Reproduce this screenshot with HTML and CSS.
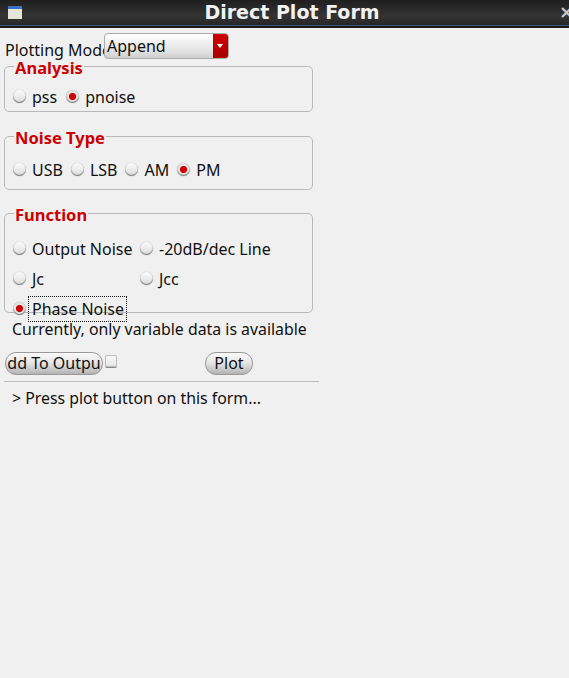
FILE: index.html
```html
<!DOCTYPE html>
<html lang="en">
<head>
    <meta charset="UTF-8">
    <title>Direct Plot Form</title>
    <link rel="stylesheet" href="styles.css">
</head>
<body>
    <div class="titlebar">
        <svg class="win-icon" width="14" height="14" viewBox="0 0 14 14">
            <rect x="0" y="0" width="14" height="13" fill="#dfe3dc"/>
            <rect x="1" y="3" width="12" height="9" fill="#e4e6da"/>
            <rect x="0" y="0" width="14" height="3" fill="#3b6fc0"/>
        </svg>
        <span class="title">Direct Plot Form</span>
        <span class="close">×</span>
    </div>

    <form class="form">
        <div class="mode-row">
            <label class="mode-label">Plotting Mode</label>
            <div class="select">
                <span class="select-text">Append</span>
                <span class="select-arrow"></span>
            </div>
        </div>

        <fieldset class="group group-analysis">
            <legend>Analysis</legend>
            <div class="radio-row">
                <label class="radio gap-a"><input type="radio" name="analysis"> pss</label>
                <label class="radio"><input type="radio" name="analysis" checked> pnoise</label>
            </div>
        </fieldset>

        <fieldset class="group group-noise">
            <legend>Noise Type</legend>
            <div class="radio-row">
                <label class="radio gap-n"><input type="radio" name="noise"> USB</label>
                <label class="radio gap-n"><input type="radio" name="noise"> LSB</label>
                <label class="radio gap-n"><input type="radio" name="noise"> AM</label>
                <label class="radio"><input type="radio" name="noise" checked> PM</label>
            </div>
        </fieldset>

        <fieldset class="group group-function">
            <legend>Function</legend>
            <div class="function-grid">
                <label class="radio"><input type="radio" name="func"> Output Noise</label>
                <label class="radio"><input type="radio" name="func"> -20dB/dec Line</label>
                <label class="radio"><input type="radio" name="func"> Jc</label>
                <label class="radio"><input type="radio" name="func"> Jcc</label>
                <label class="radio"><input type="radio" name="func" checked> <span class="focused">Phase Noise</span></label>
            </div>
        </fieldset>

        <p class="note">Currently, only variable data is available</p>

        <div class="button-row">
            <button type="button" class="btn btn-add"><span>dd To Outpu</span></button>
            <input type="checkbox" class="check">
            <button type="button" class="btn btn-plot">Plot</button>
        </div>

        <hr class="rule">
        <p class="status">&gt; Press plot button on this form...</p>
    </form>
</body>
</html>
```

FILE: styles.css
```css
html, body {
    margin: 0;
    height: 100%;
    overflow: hidden;
}
body {
    background: #f0f0f0;
    color: #111;
    font-family: "Noto Sans", sans-serif;
    font-size: 16px;
}
.titlebar {
    height: 26px;
    display: flex;
    align-items: center;
    background: linear-gradient(#1f1f1f, #333 60%, #262626);
    border-bottom: 2px solid #1a1a1a;
    box-shadow: inset 0 -1px 0 #3d5775;
    position: relative;
    overflow: hidden;
}
.win-icon {
    margin-left: 8px;
}
.title {
    position: absolute;
    left: 0;
    right: 0;
    top: 0;
    text-align: center;
    line-height: 24px;
    color: #f2f2f2;
    font-family: "DejaVu Sans", sans-serif;
    font-size: 19px;
    font-weight: bold;
    padding-left: 15px;
}
.close {
    position: absolute;
    right: -5px;
    top: 0;
    line-height: 24px;
    color: #c8c8c8;
    font-family: "DejaVu Sans", sans-serif;
    font-size: 18px;
    font-weight: bold;
}
.form {
    width: 315px;
    padding-left: 4px;
}
.mode-row {
    display: flex;
    height: 22px;
    margin-top: 5px;
}
.mode-label {
    width: 99px;
    margin-top: 8px;
    padding-left: 1px;
    white-space: nowrap;
    line-height: 19px;
}
.select {
    width: 125px;
    height: 26px;
    box-sizing: border-box;
    display: flex;
    border: 1px solid #aaa;
    border-radius: 4px;
    background: linear-gradient(#fff, #e2e2e2 70%, #cfcfcf);
    position: relative;
    overflow: hidden;
}
.select-text {
    flex: 1;
    padding-left: 2px;
    line-height: 24px;
}
.select-arrow {
    width: 15px;
    background: linear-gradient(#d00000, #a80000);
    position: relative;
}
.select-arrow::after {
    content: "";
    position: absolute;
    left: 4px;
    top: 10px;
    border-left: 3px solid transparent;
    border-right: 3px solid transparent;
    border-top: 4px solid #fff;
}
.group {
    margin: 0;
    padding: 0 0 0 9px;
    width: 309px;
    box-sizing: border-box;
    border: 1px solid #b8b8b8;
    border-radius: 5px;
}
.group legend {
    margin-left: 0;
    padding: 4px 1px 0;
    color: #cc0000;
    font-weight: bold;
    font-size: 16.5px;
    line-height: 18px;
}
.group-analysis {
    height: 57px;
}
.group-noise {
    height: 65px;
    margin-top: 13px;
}
.group-function {
    height: 111px;
    margin-top: 12px;
}
.radio-row {
    display: flex;
    margin-top: 10px;
}
.group-noise .radio-row {
    margin-top: 13px;
}
.radio {
    display: flex;
    align-items: center;
    gap: 6px;
    height: 20px;
    white-space: nowrap;
}
.gap-a {
    margin-right: 10px;
}
.gap-n {
    margin-right: 9px;
}
.radio input {
    appearance: none;
    margin: 0 0 2px -1px;
    width: 13px;
    height: 13px;
    flex: none;
    border-radius: 50%;
    background: linear-gradient(#fbfbfb, #dcdcdc);
    box-shadow: inset 0 -1px 1px #777, 0 0 1px #999;
}
.radio input:checked {
    background: radial-gradient(circle at 50% 50%, #d00000 0, #d00000 34%, #e8e8e8 44%, #cfcfcf 100%);
}
.function-grid {
    display: grid;
    grid-template-columns: 127px 1fr;
    grid-auto-rows: 20px;
    row-gap: 10px;
    margin-top: 15px;
}
.focused {
    outline: 1px dotted #111;
    outline-offset: -1px;
    padding: 0 3px 0 4px;
    margin-left: -4px;
    line-height: 26px;
}
.note {
    margin: 7px 0 0 8px;
    line-height: 19px;
    font-size: 15.85px;
    white-space: nowrap;
}
.button-row {
    display: flex;
    align-items: flex-start;
    margin-top: 13px;
    height: 23px;
}
.btn {
    height: 23px;
    padding: 0;
    border: 1px solid #999;
    border-radius: 11px;
    background: linear-gradient(#fafafa, #e6e6e6 45%, #b4b4b4);
    color: #111;
    font-family: inherit;
    font-size: 16px;
    line-height: 21px;
}
.btn-add {
    width: 98px;
    margin-left: 1px;
    overflow: hidden;
    white-space: nowrap;
}
.btn-add span {
    display: block;
}
.btn-plot {
    width: 48px;
    margin-left: 88px;
}
.check {
    appearance: none;
    margin: 3px 0 0 2px;
    width: 12px;
    height: 12px;
    border: 1px solid #bbb;
    border-radius: 2px;
    background: linear-gradient(#fafafa, #e6e6e6);
    box-shadow: 0 1px 0 #888;
}
.rule {
    margin: 6px 0 0 0;
    border: none;
    border-top: 1px solid #bbb;
}
.status {
    margin: 7px 0 0 8px;
    line-height: 19px;
    font-size: 15.85px;
}
```
